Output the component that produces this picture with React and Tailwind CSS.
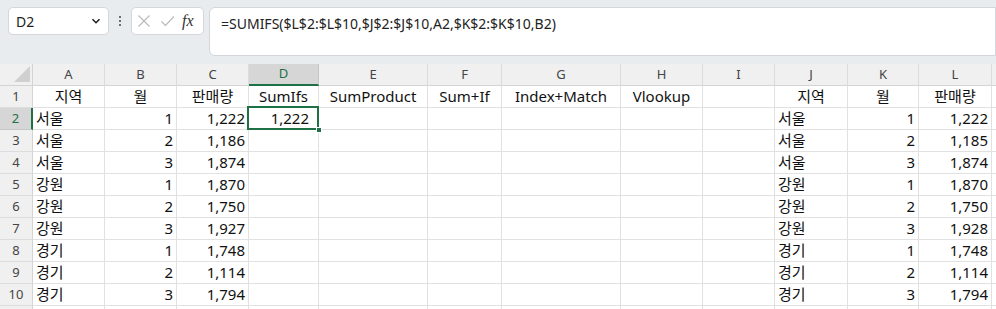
import React from "react";

const cols = ["A", "B", "C", "D", "E", "F", "G", "H", "I", "J", "K", "L", "M"];

const headers = {
  A: "지역", B: "월", C: "판매량", D: "SumIfs", E: "SumProduct", F: "Sum+If",
  G: "Index+Match", H: "Vlookup", J: "지역", K: "월", L: "판매량",
};

const regions = ["서울", "서울", "서울", "강원", "강원", "강원", "경기", "경기", "경기"];
const months = [1, 2, 3, 1, 2, 3, 1, 2, 3];
const salesC = ["1,222", "1,186", "1,874", "1,870", "1,750", "1,927", "1,748", "1,114", "1,794"];
const salesL = ["1,222", "1,185", "1,874", "1,870", "1,750", "1,928", "1,748", "1,114", "1,794"];

const cellFont = { fontFamily: '"Noto Sans", "Noto Sans CJK KR", sans-serif' };

const FormulaBar = () => (
  <div className="h-[64px] bg-[#e8ecef] flex items-start pt-[7px] pl-[8px] gap-0">
    <div className="w-[101px] h-[28px] bg-white border border-[#d3d7db] rounded-[5px] flex items-center justify-between pl-[7px] pr-[7px]">
      <span className="text-[14px] text-[#222]" style={cellFont}>D2</span>
      <svg width="10" height="10" viewBox="0 0 10 10">
        <path d="M1.5 3.2 L5 6.7 L8.5 3.2" fill="none" stroke="#222" strokeWidth="1.6" />
      </svg>
    </div>
    <div className="w-[22px] h-[28px] flex flex-col items-center justify-center gap-[2px]">
      <span className="w-[2px] h-[2px] bg-[#444] rounded-full"></span>
      <span className="w-[2px] h-[2px] bg-[#444] rounded-full"></span>
      <span className="w-[2px] h-[2px] bg-[#444] rounded-full"></span>
    </div>
    <div className="w-[73px] h-[28px] bg-white border border-[#d3d7db] rounded-[5px] flex items-center pl-[5px]">
      <svg width="14" height="14" viewBox="0 0 14 14">
        <path d="M1.5 1.5 L12.5 12.5 M12.5 1.5 L1.5 12.5" stroke="#b8b8b8" strokeWidth="1.1" />
      </svg>
      <svg width="16" height="14" viewBox="0 0 16 14" className="ml-[9px]">
        <path d="M1.5 7.5 L5.5 11.5 L14 2.5" fill="none" stroke="#b8b8b8" strokeWidth="1.1" />
      </svg>
      <span className="ml-[6px] text-[16px] italic text-[#333] leading-none" style={{ fontFamily: '"Liberation Serif", serif' }}>fx</span>
    </div>
    <div className="ml-[5px] flex-1 h-[49px] bg-white border border-[#d3d7db] rounded-l-[6px] pl-[11px] pt-[3px]">
      <span className="text-[14px] text-[#222]" style={cellFont}>
        =SUMIFS($L$2:$L$10,$J$2:$J$10,A2,$K$2:$K$10,B2)
      </span>
    </div>
  </div>
);

const gridCols = "grid grid-cols-[33px_72px_72px_72px_70px_109px_74px_119px_82px_72px_73px_71px_73px_1fr]";

const Sheet = () => {
  const rows = [];
  for (let r = 1; r <= 11; r++) rows.push(r);

  const renderCell = (r, c) => {
    let text = "";
    let align = "justify-start";
    if (r === 1) {
      text = headers[c] || "";
      align = "justify-center";
    } else if (r <= 10) {
      const i = r - 2;
      if (c === "A" || c === "J") { text = regions[i]; align = "justify-start"; }
      if (c === "B" || c === "K") { text = String(months[i]); align = "justify-end"; }
      if (c === "C") { text = salesC[i]; align = "justify-end"; }
      if (c === "L") { text = salesL[i]; align = "justify-end"; }
      if (c === "D" && r === 2) { text = "1,222"; align = "justify-end"; }
    }
    const selected = c === "D" && r === 2;
    return (
      <div
        key={c + r}
        className={`relative h-[22px] border-r border-b border-[#e1e1e1] bg-white flex items-center px-[3px] text-[15px] text-[#111] whitespace-nowrap ${align}`}
        style={cellFont}
      >
        {selected && (
          <>
            <div className="absolute left-[-2px] top-[-2px] right-[-1px] bottom-[-1px] border-2 border-[#1e7145] z-10"></div>
            <div className="absolute right-[-4px] bottom-[-4px] w-[6px] h-[6px] bg-[#1e7145] border border-white z-20"></div>
          </>
        )}
        <span className={selected ? "pr-[6px]" : ""}>{text}</span>
      </div>
    );
  };

  return (
    <div className={gridCols}>
      <div className="relative h-[22px] bg-[#f0f0f0] border-r border-b border-[#d4d4d4]">
        <svg width="16" height="16" viewBox="0 0 16 16" className="absolute right-[2px] bottom-[3px]">
          <path d="M16 0 L16 16 L0 16 Z" fill="#d0d0d0" />
        </svg>
      </div>
      {cols.map((c) => (
        <div
          key={c}
          className={`h-[22px] flex items-center justify-center text-[13px] border-r ${c === "D" ? "bg-[#d6d6d6] text-[#1e7145] border-b-2 border-b-[#1e7145] border-r-[#c6c6c6]" : "bg-[#f0f0f0] text-[#444] border-b border-b-[#d4d4d4] border-r-[#dcdcdc]"}`}
          style={cellFont}
        >
          {c === "M" ? "" : c}
        </div>
      ))}
      {rows.map((r) => (
        <React.Fragment key={r}>
          <div
            className={`h-[22px] flex items-center justify-center text-[13px] border-b ${r === 2 ? "bg-[#d6d6d6] text-[#1e7145] border-r-2 border-r-[#1e7145] border-b-[#c6c6c6]" : "bg-[#f0f0f0] text-[#444] border-r border-r-[#d4d4d4] border-b-[#dcdcdc]"}`}
            style={cellFont}
          >
            {r === 11 ? "" : r}
          </div>
          {cols.map((c) => renderCell(r, c))}
        </React.Fragment>
      ))}
    </div>
  );
};

export default function App() {
  return (
    <div className="w-[996px] h-[309px] overflow-hidden bg-white">
      <FormulaBar />
      <Sheet />
    </div>
  );
}
